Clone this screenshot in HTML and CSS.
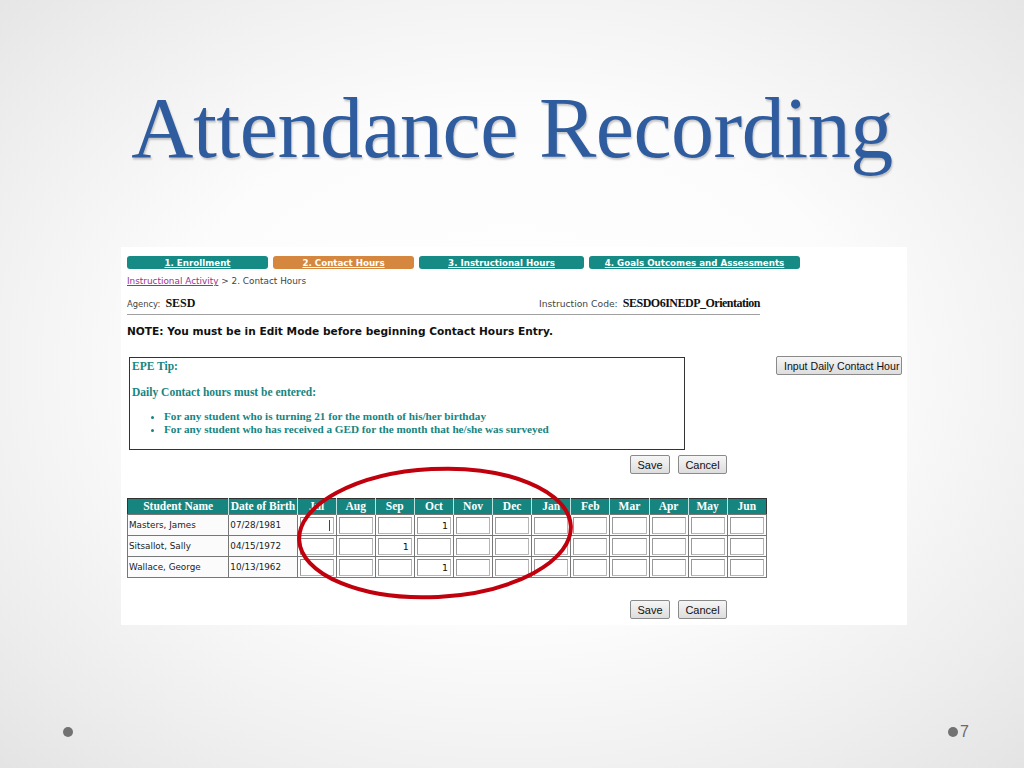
FILE: index.html
```html
<!DOCTYPE html>
<html>
<head>
<meta charset="utf-8">
<link rel="stylesheet" href="styles.css">
</head>
<body>
<div class="slide">
  <h1 class="title">Attendance Recording</h1>
  <div class="shot">
    <div class="tabs">
      <span class="tab t1">1. Enrollment</span>
      <span class="tab t2 active">2. Contact Hours</span>
      <span class="tab t3">3. Instructional Hours</span>
      <span class="tab t4">4. Goals Outcomes and Assessments</span>
    </div>
    <div class="crumb"><span class="link">Instructional Activity</span> &gt; 2. Contact Hours</div>
    <div class="agency">
      <div class="ag-left"><span class="lbl">Agency:</span> <b class="val">SESD</b></div>
      <div class="ag-right"><span class="lbl lbl-r">Instruction Code:</span> <b class="val code">SESDO6INEDP_Orientation</b></div>
    </div>
    <div class="rule"></div>
    <div class="note">NOTE: You must be in Edit Mode before beginning Contact Hours Entry.</div>
    <div class="tiprow">
      <div class="tip">
        <div class="tip-h">EPE Tip:</div>
        <div class="tip-s">Daily Contact hours must be entered:</div>
        <ul class="tip-l">
          <li>For any student who is turning 21 for the month of his/her birthday</li>
          <li>For any student who has received a GED for the month that he/she was surveyed</li>
        </ul>
      </div>
      <div class="btn wide"><span>Input Daily Contact Hour</span></div>
    </div>
    <div class="actions a1"><span class="btn">Save</span><span class="btn">Cancel</span></div>
    <table class="grid">
      <thead>
        <tr><th class="c-name">Student Name</th><th class="c-dob">Date of Birth</th><th>Jul</th><th>Aug</th><th>Sep</th><th>Oct</th><th>Nov</th><th>Dec</th><th>Jan</th><th>Feb</th><th>Mar</th><th>Apr</th><th>May</th><th>Jun</th></tr>
      </thead>
      <tbody>
        <tr><td class="txt">Masters, James</td><td class="txt">07/28/1981</td><td><div class="in caret"></div></td><td><div class="in"></div></td><td><div class="in"></div></td><td><div class="in">1</div></td><td><div class="in"></div></td><td><div class="in"></div></td><td><div class="in"></div></td><td><div class="in"></div></td><td><div class="in"></div></td><td><div class="in"></div></td><td><div class="in"></div></td><td><div class="in"></div></td></tr>
        <tr><td class="txt">Sitsallot, Sally</td><td class="txt">04/15/1972</td><td><div class="in"></div></td><td><div class="in"></div></td><td><div class="in">1</div></td><td><div class="in"></div></td><td><div class="in"></div></td><td><div class="in"></div></td><td><div class="in"></div></td><td><div class="in"></div></td><td><div class="in"></div></td><td><div class="in"></div></td><td><div class="in"></div></td><td><div class="in"></div></td></tr>
        <tr><td class="txt">Wallace, George</td><td class="txt">10/13/1962</td><td><div class="in"></div></td><td><div class="in"></div></td><td><div class="in"></div></td><td><div class="in">1</div></td><td><div class="in"></div></td><td><div class="in"></div></td><td><div class="in"></div></td><td><div class="in"></div></td><td><div class="in"></div></td><td><div class="in"></div></td><td><div class="in"></div></td><td><div class="in"></div></td></tr>
      </tbody>
    </table>
    <div class="actions a2"><span class="btn">Save</span><span class="btn">Cancel</span></div>
    <svg class="circle" width="300" height="150" viewBox="0 0 300 150">
      <ellipse cx="150" cy="75" rx="136" ry="64" transform="rotate(-3 150 75)" fill="none" stroke="#c0000c" stroke-width="4"/>
    </svg>
  </div>
  <div class="footer">
    <span class="dot"></span>
    <span class="pg"><span class="dot"></span>7</span>
  </div>
</div>
</body>
</html>
```
FILE: styles.css
```css
* { box-sizing: border-box; }
html, body { margin: 0; padding: 0; }
body { width: 1024px; height: 768px; overflow: hidden; }
.slide {
  width: 1024px; height: 768px; position: relative;
  background: radial-gradient(ellipse 75% 75% at 50% 48%, #ffffff 0%, #fcfcfc 45%, #ececec 80%, #e2e2e2 100%);
  display: flex; flex-direction: column;
}
.title {
  margin: 85px 0 0 0;
  font-family: "Liberation Serif", serif;
  font-weight: normal;
  font-size: 86px;
  line-height: 86px;
  height: 86px;
  color: #2f5c9e;
  text-align: center;
  letter-spacing: -0.5px;
  padding-left: 0;
  text-shadow: 1px 2px 2px rgba(0,0,0,0.22);
}
.shot {
  position: relative;
  margin: 76px 0 0 121px;
  width: 786px; height: 378px;
  background: #ffffff;
  padding: 9px 0 0 6px;
  font-family: "DejaVu Sans", sans-serif;
}
.tabs { display: flex; gap: 5px; height: 13px; }
.tab {
  display: flex; align-items: center; justify-content: center;
  height: 13px; border-radius: 3px;
  background: #168a84; color: #fff;
  font-weight: bold; font-size: 8.7px; text-decoration: underline;
  white-space: nowrap;
}
.tab.active { background: #d6873f; }
.t1, .t2 { width: 141px; }
.t3 { width: 165px; }
.t4 { width: 211px; }
.crumb {
  margin-top: 7px; height: 11px; line-height: 11px;
  font-size: 8.9px; color: #444;
}
.crumb .link { color: #9b2f93; text-decoration: underline; }
.agency {
  display: flex; margin-top: 5px; height: 14px; align-items: baseline; width: 633px;
}
.ag-left { flex: 1; }
.lbl { font-size: 8.4px; color: #444; }
.lbl-r { font-size: 9.2px; }
.val { font-family: "Liberation Serif", serif; font-size: 12px; color: #111; }
.val.code { letter-spacing: -0.5px; }
.rule { margin-top: 8px; width: 633px; height: 1px; background: #a0a0a0; }
.note {
  margin-top: 9px; height: 14px; line-height: 14px;
  font-size: 10.6px; font-weight: bold; color: #111;
}
.tiprow { display: flex; margin-top: 18px; height: 92px; }
.tip {
  width: 556px; height: 93px; margin: 1px 0 0 2px;
  border: 1px solid #333;
  padding: 1px 0 0 2px;
  font-family: "Liberation Serif", serif; font-weight: bold;
  color: #17857f; font-size: 11.2px;
}
.tip-h { font-size: 11.5px; line-height: 14px; }
.tip-s { margin-top: 12px; font-size: 11.5px; line-height: 14px; }
.tip-l { margin: 11px 0 0 0; padding-left: 32px; line-height: 13px; }
.tip-l li { padding-left: 0; }
.btn {
  display: inline-flex; align-items: center; justify-content: center;
  height: 19px; padding: 0 6px;
  border: 1px solid #8a8a8a; border-radius: 2px;
  background: linear-gradient(#f6f6f6, #dddddd);
  font-family: "Liberation Sans", sans-serif; font-size: 11px; color: #111;
}
.btn.wide {
  width: 126px; margin-left: 91px; overflow: hidden; justify-content: flex-start;
  padding: 0 0 0 7px; white-space: nowrap; font-size: 10.6px;
}
.actions { display: flex; gap: 8px; padding-left: 503px; height: 19px; }
.actions .btn:first-child { width: 40px; }
.actions .btn:last-child { width: 49px; }
.a1 { margin-top: 7px; }
.a2 { margin-top: 22px; }
.grid {
  margin-top: 24px;
  border-collapse: collapse;
  border: 1px solid #333;
  table-layout: fixed;
  width: 640px;
}
.grid th {
  background: #17857f; color: #fff;
  font-family: "Liberation Serif", serif; font-weight: bold; font-size: 11.5px;
  height: 16px; padding: 0; line-height: 15px;
  border-left: 1px solid #bfe3e0;
  width: 39px;
}
.grid th:first-child { border-left: none; }
.grid th.c-name { width: 101px; }
.grid th.c-dob { width: 68px; }
.grid td {
  height: 21px; padding: 0 2px;
  border: 1px solid #777;
  background: #fff;
}
.grid td.txt {
  font-size: 8.8px; color: #222; padding: 0 0 0 1px; white-space: nowrap; overflow: hidden;
  background: #fbfbfb;
}
.in {
  height: 17px; width: 100%;
  border: 1px solid #b5b5b5; border-top-color: #8e8e8e; border-left-color: #9a9a9a;
  font-size: 9.5px; text-align: right; padding-right: 2px; line-height: 15px; color: #111;
}
.in.caret { position: relative; }
.in.caret::after {
  content: ""; position: absolute; right: 3px; top: 2px; width: 1px; height: 11px; background: #444;
}
.circle { position: absolute; left: 164px; top: 211px; }
.footer {
  position: absolute; left: 0; right: 0; top: 724px; height: 16px;
  display: flex; justify-content: space-between; align-items: center;
  padding: 0 55px 0 63px;
}
.dot { display: inline-block; width: 10px; height: 10px; border-radius: 50%; background: #727272; }
.pg {
  display: flex; align-items: center; gap: 2px;
  font-family: "Liberation Sans", sans-serif; font-size: 16px; color: #6a6a6a;
}
```
